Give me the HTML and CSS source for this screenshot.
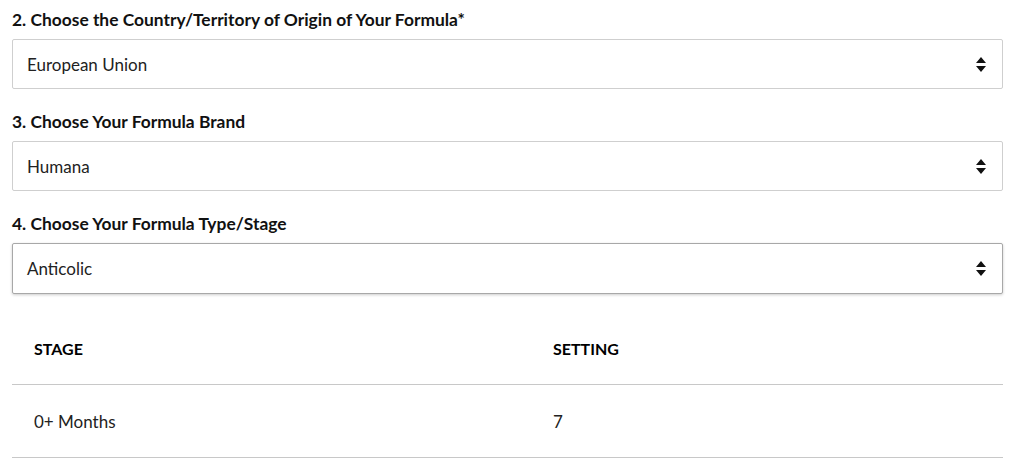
FILE: index.html
```html
<!DOCTYPE html>
<html>
<head>
<meta charset="utf-8">
<link rel="stylesheet" href="styles.css">
</head>
<body>
<div class="form">
  <div class="field">
    <label class="label">2. Choose the Country/Territory of Origin of Your Formula*</label>
    <div class="select">
      <span class="value">European Union</span>
      <svg class="arrows" width="10" height="15" viewBox="0 0 10 15"><path d="M0 6 L5 0 L10 6 Z M0 9 L10 9 L5 15 Z" fill="#111"/></svg>
    </div>
  </div>
  <div class="field">
    <label class="label">3. Choose Your Formula Brand</label>
    <div class="select">
      <span class="value">Humana</span>
      <svg class="arrows" width="10" height="15" viewBox="0 0 10 15"><path d="M0 6 L5 0 L10 6 Z M0 9 L10 9 L5 15 Z" fill="#111"/></svg>
    </div>
  </div>
  <div class="field">
    <label class="label">4. Choose Your Formula Type/Stage</label>
    <div class="select focused">
      <span class="value">Anticolic</span>
      <svg class="arrows" width="10" height="15" viewBox="0 0 10 15"><path d="M0 6 L5 0 L10 6 Z M0 9 L10 9 L5 15 Z" fill="#111"/></svg>
    </div>
  </div>
  <table class="table">
    <thead>
      <tr><th class="col-stage">STAGE</th><th>SETTING</th></tr>
    </thead>
    <tbody>
      <tr><td>0+ Months</td><td>7</td></tr>
    </tbody>
  </table>
</div>
</body>
</html>
```

FILE: styles.css
```css
html, body {
  margin: 0;
  padding: 0;
  background: #fff;
}
body {
  font-family: Lato, "Open Sans", sans-serif;
  color: #111;
}
.form {
  padding: 8px 18px 0 12px;
  display: flex;
  flex-direction: column;
}
.field {
  display: flex;
  flex-direction: column;
  margin-bottom: 21px;
}
.label {
  font-weight: 700;
  font-size: 17.4px;
  line-height: 24px;
  margin-bottom: 7px;
  color: #111;
}
.select {
  height: 50px;
  box-sizing: border-box;
  border: 1px solid #cfcfcf;
  border-radius: 2px;
  display: flex;
  align-items: center;
  justify-content: space-between;
  padding: 0 16px 0 14px;
  background: #fff;
}
.select.focused {
  height: 51px;
  border-color: #a8a8a8;
  box-shadow: 0 1px 3px rgba(0, 0, 0, 0.2);
}
.value {
  font-size: 17px;
  color: #222;
}
.arrows {
  display: block;
}
.table {
  width: 100%;
  border-collapse: collapse;
  margin-top: -3px;
}
.table th, .table td {
  text-align: left;
  padding: 0 22px;
  height: 72px;
  border-bottom: 1px solid #c8c8c8;
}
.table th {
  font-size: 16px;
  font-weight: 700;
  color: #000;
}
.col-stage {
  width: 475px;
}
.table td {
  font-size: 17px;
  color: #222;
}
```
